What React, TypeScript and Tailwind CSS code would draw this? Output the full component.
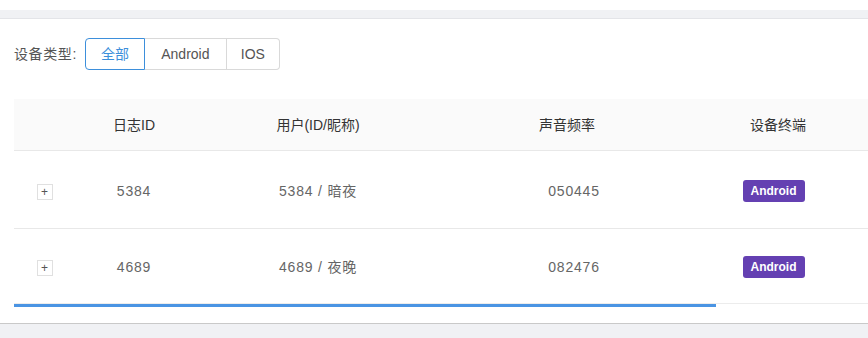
const font = { fontFamily: '"Liberation Sans", "Noto Sans CJK SC", sans-serif' };

const rows = [
  { id: "5384", user: "5384 / 暗夜", freq: "050445", device: "Android" },
  { id: "4689", user: "4689 / 夜晚", freq: "082476", device: "Android" },
];

function RadioGroup() {
  const options = ["全部", "Android", "IOS"];
  return (
    <div className="flex h-8">
      {options.map((o, i) => (
        <button
          key={o}
          className={
            i === 0
              ? "h-8 w-[60px] rounded-l border border-[#3d8fdb] text-[14px] text-[#3d8fdb] bg-white"
              : i === 1
                ? "h-8 w-[82px] border-y border-r border-[#d9d9d9] text-[14px] text-[#555] bg-white"
                : "h-8 w-[53px] rounded-r border-y border-r border-[#d9d9d9] text-[14px] text-[#555] bg-white"
          }
        >
          {o}
        </button>
      ))}
    </div>
  );
}

function ExpandIcon() {
  return (
    <span className="flex h-4 w-4 items-center justify-center border border-[#e0e0e0] bg-white text-[12px] leading-none text-[#555]">
      +
    </span>
  );
}

export default function App() {
  return (
    <div className="h-[338px] w-[868px] overflow-hidden bg-[#f0f1f4]" style={font}>
      <div className="h-[10px] bg-white" />
      <div className="h-[8px]" />
      <div className="h-[305px] border-t border-[#e3e4e8] bg-white shadow-[0_1px_0_#c9c9c9]">
        <div className="flex items-center gap-[8px] pl-[14px] pt-[19px]">
          <span className="text-[14px] tracking-[0.6px] text-[#555]">设备类型:</span>
          <RadioGroup />
        </div>
        <div className="ml-[14px] mt-[29px] w-[900px]">
          <div className="flex h-[52px] items-center border-b border-[#e8e8e8] bg-[#fafafa] pt-[1px] text-[14px] text-[#333]">
            <div className="w-[46px]" />
            <div className="w-[148px] text-center">日志ID</div>
            <div className="w-[220px] text-center">用户(ID/昵称)</div>
            <div className="w-[278px] text-center">声音频率</div>
            <div className="w-[144px] text-center">设备终端</div>
          </div>
          {rows.map((r, i) => (
            <div
              key={r.id}
              className={
                i === 0
                  ? "flex h-[78px] items-center border-b border-[#e8e8e8] pt-[3px] text-[14px] tracking-[0.8px] text-[#666]"
                  : "flex h-[74px] items-center pt-[2px] text-[14px] tracking-[0.8px] text-[#666]"
              }
            >
              <div className="flex w-[46px] pl-[23px] pt-[1px]">
                <ExpandIcon />
              </div>
              <div className="w-[148px] text-center">{r.id}</div>
              <div className="w-[220px] text-center">{r.user}</div>
              <div className="w-[278px] pl-[14px] text-center">{r.freq}</div>
              <div className="flex w-[144px] justify-center pr-[9px]">
                <span className="rounded-[3px] bg-[#6440b2] px-[8px] py-[2px] text-[12px] font-bold tracking-normal text-white">
                  {r.device}
                </span>
              </div>
            </div>
          ))}
          <div className="relative h-[4px] border-t border-[#ececec]">
            <div className="absolute left-0 top-0 h-[3px] w-[702px] bg-[#4a94e3]" />
          </div>
        </div>
      </div>
    </div>
  );
}
